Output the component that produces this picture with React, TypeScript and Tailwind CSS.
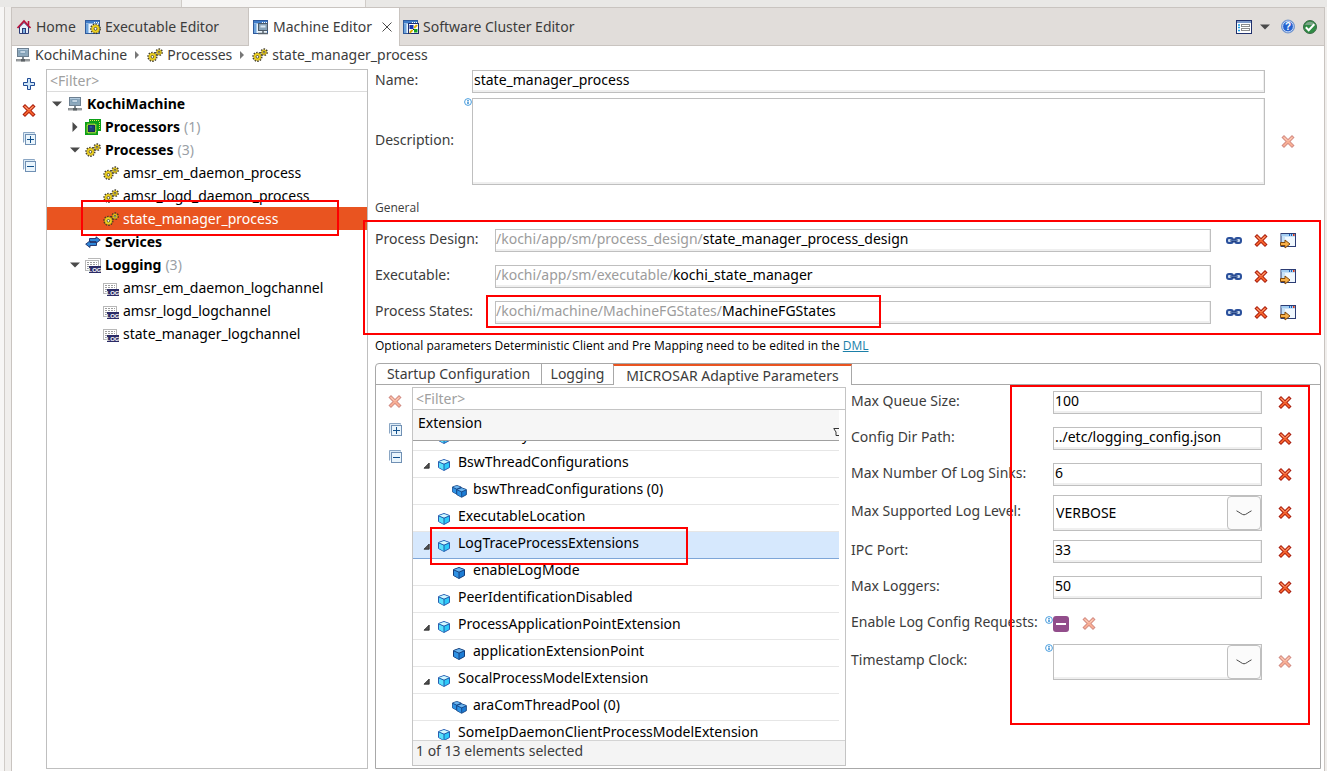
/**
 * MachineEditorPage
 * Editor pane for a machine model: element tree on the left, process form on the right.
 */

import { useState, type ReactNode } from 'react';

// ---------------------------------------------------------------- icons

function Svg({ children, size = 16, className = '' }: { children: ReactNode; size?: number; className?: string }) {
  return (
    <svg width={size} height={size} viewBox={`0 0 ${size} ${size}`} className={`shrink-0 ${className}`} aria-hidden="true">
      {children}
    </svg>
  );
}

function HomeIcon() {
  return (
    <Svg>
      <path d="M3.500 8v6.500h9V8L8 3.500z" fill="#e8f0fa" stroke="#2c3c78" />
      <rect x="6.500" y="9.500" width="3" height="5" fill="#7fb0e0" stroke="#2c3c78" />
      <path d="M1.500 9 8 2l6.500 7" fill="none" stroke="#b8103c" strokeWidth="1.800" />
      <path d="M12.500 2v4" stroke="#b8103c" strokeWidth="1.600" />
    </Svg>
  );
}

function WindowBase() {
  return (
    <>
      <rect x="0.500" y="1.500" width="14" height="13" fill="#eaf4fc" stroke="#2f5a9c" />
      <rect x="1" y="2" width="13" height="2.500" fill="#3f7cc8" />
      <path d="M9 3.500h1M11 3.500h1M13 3.500h1" stroke="#fff" />
      <rect x="1" y="5" width="2.500" height="9" fill="#6ea4dc" />
    </>
  );
}

function GearShape({ cx, cy, r }: { cx: number; cy: number; r: number }) {
  return (
    <>
      <circle cx={cx} cy={cy} r={r} fill="none" stroke="#3a3626" strokeWidth="2.400" strokeDasharray="1.300 1.100" />
      <circle cx={cx} cy={cy} r={r - 0.2} fill="#f0d420" stroke="#a88c10" strokeWidth="0.500" />
      <circle cx={cx} cy={cy} r={r * 0.34} fill="#fff" stroke="#3a3626" strokeWidth="0.800" />
    </>
  );
}

function ExecutableEditorIcon() {
  return (
    <Svg>
      <WindowBase />
      <GearShape cx={10.5} cy={9.8} r={4.2} />
    </Svg>
  );
}

function MachineEditorIcon() {
  return (
    <Svg>
      <WindowBase />
      <rect x="5.500" y="4.500" width="9" height="7" fill="#86a2b8" stroke="#4c5a68" />
      <rect x="7.500" y="6.500" width="5" height="2" fill="#dceaf4" />
      <path d="M10 12v2M5 14.500h10" stroke="#5a646e" strokeWidth="1.500" />
    </Svg>
  );
}

function ClusterEditorIcon() {
  return (
    <Svg>
      <WindowBase />
      <rect x="5.500" y="4.500" width="10" height="10" fill="#fff" stroke="#1c2c70" />
      <rect x="6.500" y="6" width="4" height="4" fill="#1838b0" />
      <rect x="11" y="10" width="3.500" height="3.500" fill="#12a020" />
      <path d="M11 8.500h1v-1h1v-1h1.500M6.500 13.500h1v-1h1v-1h1.500" stroke="#e0b000" strokeWidth="1.400" fill="none" />
      <path d="M10 10l1 1" stroke="#222" />
    </Svg>
  );
}

function MachineIcon() {
  return (
    <Svg>
      <rect x="2.500" y="1.500" width="11" height="8" fill="#8ea9bd" stroke="#6c7f90" />
      <path d="M3 2.500h10" stroke="#b4cce0" />
      <rect x="5" y="4" width="5.500" height="2" fill="#eef6fc" stroke="#5f86a4" strokeWidth="0.600" />
      <rect x="7" y="10" width="2" height="3" fill="#7c868e" />
      <rect x="1.500" y="12.500" width="13" height="1.500" fill="#a8acb0" stroke="#84898c" strokeWidth="0.800" />
      <rect x="6" y="12" width="4" height="2.500" fill="#5c6266" />
    </Svg>
  );
}

function GearsIcon() {
  return (
    <Svg>
      <GearShape cx={12} cy={5.2} r={2.7} />
      <GearShape cx={5.4} cy={9.8} r={3.9} />
    </Svg>
  );
}

function ProcessorsIcon() {
  return (
    <Svg>
      <rect x="4" y="0" width="12" height="12" fill="#0ca018" />
      <path d="M5 1.500h9M14.500 3v8" stroke="#f0e850" strokeDasharray="1 1" />
      <rect x="0" y="3" width="13" height="13" fill="#0ca018" />
      <rect x="2.500" y="5.500" width="8" height="8" fill="none" stroke="#f4ec50" strokeDasharray="1 1" strokeWidth="2" />
      <rect x="3.500" y="6.500" width="6" height="6" fill="#1c3f78" stroke="#16305e" />
      <path d="M5 8h2" stroke="#3f6cb0" />
    </Svg>
  );
}

function ServicesIcon() {
  return (
    <Svg>
      <path d="M4.500 4.500H11V2.800L15.300 6 11 9.200V7.500H4.500z" fill="#2f86d8" stroke="#1c2c66" strokeWidth="0.900" />
      <path d="M11.500 8.500H5V6.800L.7 10.200 5 13.500v-2h6.500z" fill="#2f86d8" stroke="#1c2c66" strokeWidth="0.900" />
    </Svg>
  );
}

function LogIcon({ stacked = false }: { stacked?: boolean }) {
  return (
    <Svg>
      {stacked && <path d="M3 1.500h12.500V9" fill="none" stroke="#b8b8b8" />}
      <rect x="0.500" y="3.500" width="13" height="10" fill="#fff" stroke="#b8b8b8" />
      <path d="M2 5.500h10M2 7.500h10M2 9.500h2M2 11.500h2" stroke="#9c9c9c" strokeDasharray="2 1" />
      <rect x="4" y="9" width="12" height="7" fill="#2b2b66" />
      <text x="10" y="14.800" textAnchor="middle" fontSize="6" fontWeight="700" fill="#fff" fontFamily="Liberation Sans, sans-serif">
        LOG
      </text>
    </Svg>
  );
}

function AddIcon() {
  return (
    <Svg>
      <path d="M6.500 2.500h3v4h4v3h-4v4h-3v-4h-4v-3h4z" fill="#cfe6f8" stroke="#1f4a94" />
    </Svg>
  );
}

function DeleteIcon({ faded = false }: { faded?: boolean }) {
  return (
    <Svg className={faded ? 'opacity-50' : ''}>
      <path d="M4 3.500l8 8M12 3.500l-8 8" stroke="#a4180a" strokeWidth="3.600" strokeLinecap="square" />
      <path d="M4 3.500l8 8M12 3.500l-8 8" stroke="#f4622c" strokeWidth="1.800" strokeLinecap="square" />
      <path d="M4 3.500l3 3M12 3.500l-3 3" stroke="#fbb898" strokeWidth="1" />
    </Svg>
  );
}

function TreeToggleIcon({ expand = false }: { expand?: boolean }) {
  return (
    <Svg>
      <path d="M2.500 12.500v-10h11v1" fill="#dcebf6" stroke="#8aa6c4" />
      <rect x="4.500" y="4.500" width="10" height="10" fill="#eaf5fc" stroke="#7090b4" />
      <path d="M6 9.500h7" stroke="#12508c" />
      {expand && <path d="M9.500 6v7" stroke="#12508c" />}
    </Svg>
  );
}

function LinkIcon() {
  return (
    <Svg>
      <rect x="1" y="5" width="6" height="5" rx="2" fill="#c8daf0" stroke="#2a509c" strokeWidth="2" />
      <rect x="9" y="5" width="6" height="5" rx="2" fill="#c8daf0" stroke="#2a509c" strokeWidth="2" />
      <path d="M4.500 7.500h7" stroke="#1c3470" strokeWidth="2.400" />
      <path d="M5 7.300h6" stroke="#6a94d4" strokeWidth="0.800" />
    </Svg>
  );
}

function OpenIcon() {
  return (
    <Svg>
      <rect x="1" y="0.500" width="14.500" height="13" fill="#c8e2f8" stroke="#2c3c74" />
      <rect x="5" y="4" width="10" height="9" fill="#f0f8fe" />
      <rect x="1.500" y="1" width="13.500" height="2" fill="#a4cef2" />
      <path d="M9 2h1M11 2h1" stroke="#1c60b8" strokeWidth="2" />
      <path d="M13 2h1.500" stroke="#d83818" strokeWidth="2" />
      <path d="M.5 9.500h4.500V7l5 4-5 4v-2.500H.5z" fill="#f8b048" stroke="#80480c" />
    </Svg>
  );
}

function ListViewIcon() {
  return (
    <Svg>
      <rect x="0.500" y="1.500" width="15" height="13" fill="#fff" stroke="#20306c" />
      <rect x="1" y="2" width="14" height="2" fill="#7c98c8" />
      <path d="M2 6h2M2 8.500h2M2 11.500h2" stroke="#18a0e8" strokeWidth="1.400" />
      <rect x="5.500" y="5.500" width="8" height="2" fill="#fff" stroke="#8c8c8c" />
      <rect x="5.500" y="9.500" width="8" height="2" fill="#fff" stroke="#8c8c8c" />
    </Svg>
  );
}

function HelpIcon() {
  return (
    <Svg>
      <circle cx="8" cy="7.500" r="6.500" fill="#2462d0" stroke="#7c9ccc" />
      <circle cx="8" cy="7.500" r="5.400" fill="none" stroke="#fff" strokeWidth="0.800" />
      <text x="8" y="11.300" textAnchor="middle" fontSize="10" fontWeight="700" fill="#fff" fontFamily="Liberation Sans, sans-serif">
        ?
      </text>
    </Svg>
  );
}

function ValidIcon() {
  return (
    <Svg>
      <circle cx="8" cy="8" r="6.500" fill="#2f8c44" stroke="#3c6a48" />
      <path d="M3 6a5.500 5.500 0 0 1 10 0" fill="#7ca488" />
      <path d="M3.800 8.200l2.900 3 5.600-6" fill="none" stroke="#fff" strokeWidth="2" />
    </Svg>
  );
}

function InfoIcon() {
  return (
    <Svg size={8}>
      <circle cx="4" cy="4" r="3.400" fill="#fff" stroke="#4a9ede" strokeWidth="1" />
      <path d="M4 3.600v2.400M4 2v1" stroke="#2a86d0" strokeWidth="1.400" />
    </Svg>
  );
}

function Cube({ light = false }: { light?: boolean }) {
  return (
    <>
      <path d="M6 0.500l5.500 2v6L6 11.500.5 8.500v-6z" fill={light ? '#2cc8f8' : '#1c7cd4'} stroke={light ? '#2c5cb0' : '#143c78'} />
      <path d="M6 1l5 1.700L6 5 1 2.700z" fill={light ? '#d4f6fe' : '#6cb4ee'} />
      <path d="M1 3.200l5 2v6L1 8.300z" fill={light ? '#58e0fc' : '#2f92e4'} />
      <path d="M1 3l5 2.200L11 3M6 5.200V11" fill="none" stroke={light ? '#1c4ca0' : '#143c78'} strokeWidth="0.900" />
    </>
  );
}

function CubeIcon({ kind }: { kind: CubeKind }) {
  if (kind === 'double') {
    return (
      <svg width="16" height="13" viewBox="0 0 16 13" className="shrink-0" aria-hidden="true">
        <g transform="scale(.8)">
          <Cube />
        </g>
        <g transform="translate(4.500 2.400) scale(.86)">
          <Cube />
        </g>
      </svg>
    );
  }
  return (
    <svg width="16" height="13" viewBox="0 0 16 13" className="shrink-0" aria-hidden="true">
      <g transform="translate(1 1)">
        <Cube light={kind === 'light'} />
      </g>
    </svg>
  );
}

function CaretDown() {
  return (
    <svg width="10" height="6" viewBox="0 0 10 6" className="shrink-0" aria-hidden="true">
      <path d="M0 .5h10L5 5.500z" fill="#4a4a4a" />
    </svg>
  );
}

function CaretRight() {
  return (
    <svg width="6" height="10" viewBox="0 0 6 10" className="shrink-0" aria-hidden="true">
      <path d="M.5 0v10L5.500 5z" fill="#4a4a4a" />
    </svg>
  );
}

function CrumbArrow() {
  return (
    <svg width="4" height="8" viewBox="0 0 4 8" className="mx-1 shrink-0" aria-hidden="true">
      <path d="M0 0v8l4-4z" fill="#777" />
    </svg>
  );
}

// ---------------------------------------------------------------- data

type CubeKind = 'light' | 'dark' | 'double';

interface TreeNode {
  label: string;
  indent: string;
  icon: ReactNode;
  state?: 'open' | 'closed';
  count?: number;
  bold?: boolean;
}

const TREE: TreeNode[] = [
  { label: 'KochiMachine', indent: 'pl-1', icon: <MachineIcon />, state: 'open', bold: true },
  { label: 'Processors', indent: 'pl-[22px]', icon: <ProcessorsIcon />, state: 'closed', count: 1, bold: true },
  { label: 'Processes', indent: 'pl-[22px]', icon: <GearsIcon />, state: 'open', count: 3, bold: true },
  { label: 'amsr_em_daemon_process', indent: 'pl-10', icon: <GearsIcon /> },
  { label: 'amsr_logd_daemon_process', indent: 'pl-10', icon: <GearsIcon /> },
  { label: 'state_manager_process', indent: 'pl-10', icon: <GearsIcon /> },
  { label: 'Services', indent: 'pl-[22px]', icon: <ServicesIcon />, bold: true },
  { label: 'Logging', indent: 'pl-[22px]', icon: <LogIcon stacked />, state: 'open', count: 3, bold: true },
  { label: 'amsr_em_daemon_logchannel', indent: 'pl-10', icon: <LogIcon /> },
  { label: 'amsr_logd_logchannel', indent: 'pl-10', icon: <LogIcon /> },
  { label: 'state_manager_logchannel', indent: 'pl-10', icon: <LogIcon /> },
];

const REFERENCES = [
  { id: 'design', label: 'Process Design:', path: '/kochi/app/sm/process_design/', name: 'state_manager_process_design' },
  { id: 'executable', label: 'Executable:', path: '/kochi/app/sm/executable/', name: 'kochi_state_manager' },
  { id: 'states', label: 'Process States:', path: '/kochi/machine/MachineFGStates/', name: 'MachineFGStates' },
];

const EXTENSIONS: { label: string; kind: CubeKind; open?: boolean }[] = [
  { label: 'ArtifactKey', kind: 'light' },
  { label: 'BswThreadConfigurations', kind: 'light', open: true },
  { label: 'bswThreadConfigurations (0)', kind: 'double' },
  { label: 'ExecutableLocation', kind: 'light' },
  { label: 'LogTraceProcessExtensions', kind: 'light', open: true },
  { label: 'enableLogMode', kind: 'dark' },
  { label: 'PeerIdentificationDisabled', kind: 'light' },
  { label: 'ProcessApplicationPointExtension', kind: 'light', open: true },
  { label: 'applicationExtensionPoint', kind: 'dark' },
  { label: 'SocalProcessModelExtension', kind: 'light', open: true },
  { label: 'araComThreadPool (0)', kind: 'double' },
  { label: 'SomeIpDaemonClientProcessModelExtension', kind: 'light' },
];

const FIELD = 'border border-[#bfbfbf] bg-white shadow-[inset_-1px_-2px_0_#efefef]';
const MARK = 'pointer-events-none absolute z-20 border-2 border-[#fe0000]';

// ---------------------------------------------------------------- parts

function IconButton({ label, children }: { label: string; children: ReactNode }) {
  return (
    <button type="button" aria-label={label} className="flex h-4 w-4 shrink-0 items-center justify-center">
      {children}
    </button>
  );
}

function EditorTabs() {
  return (
    <div className="flex h-[38px] shrink-0 items-stretch bg-[#e1ddda]">
      <button type="button" className="flex w-[69px] items-center gap-1 border-b border-[#c9c4c0] pl-1">
        <HomeIcon />
        Home
      </button>
      <button type="button" className="flex w-[167px] items-center gap-1 whitespace-nowrap border-b border-[#c9c4c0] pl-1">
        <ExecutableEditorIcon />
        Executable Editor
      </button>
      <div className="flex w-[152px] items-center justify-between border-x border-[#c9c4c0] bg-white pl-1 pr-[7px]">
        <button type="button" className="flex items-center gap-1 whitespace-nowrap">
          <MachineEditorIcon />
          Machine Editor
        </button>
        <button type="button" aria-label="Close tab" className="flex">
          <Svg size={10}>
            <path d="M.5.5l9 9M9.500.5l-9 9" stroke="#4a4a4a" />
          </Svg>
        </button>
      </div>
      <button type="button" className="flex items-center gap-1 whitespace-nowrap border-b border-[#c9c4c0] pl-[3px]">
        <ClusterEditorIcon />
        Software Cluster Editor
      </button>
      <div className="flex flex-1 items-center justify-end border-b border-[#c9c4c0] pr-[6px]">
        <IconButton label="Layout"><ListViewIcon /></IconButton>
        <button type="button" aria-label="View menu" className="ml-2 mr-[10px] flex"><CaretDown /></button>
        <IconButton label="Help"><HelpIcon /></IconButton>
        <span className="ml-[6px] flex"><IconButton label="Validation status"><ValidIcon /></IconButton></span>
      </div>
    </div>
  );
}

function Breadcrumb() {
  return (
    <nav className="flex h-[23px] shrink-0 items-center gap-1 pb-[5px] pl-[3px]">
      <MachineIcon />
      <a href="#machine">KochiMachine</a>
      <CrumbArrow />
      <GearsIcon />
      <a href="#processes">Processes</a>
      <CrumbArrow />
      <GearsIcon />
      <a href="#process">state_manager_process</a>
    </nav>
  );
}

function ModelTree() {
  const [selected, setSelected] = useState('state_manager_process');

  return (
    <section className="relative flex w-[322px] shrink-0 flex-col border border-[#bfbfbf] text-black">
      <input
        aria-label="Filter model tree"
        placeholder="<Filter>"
        className="h-[22px] shrink-0 border-b border-[#dcdcdc] px-[3px] outline-none placeholder:text-[#a0a0a0]"
      />
      <ul>
        {TREE.map((node) => (
          <li key={node.label}>
            <button
              type="button"
              onClick={() => setSelected(node.label)}
              className={`flex h-[23px] w-full items-center gap-1 ${node.indent} ${
                node.label === selected ? 'bg-[#e95420] text-white' : ''
              }`}
            >
              <span className="flex w-3 shrink-0 justify-center">
                {node.state === 'open' && <CaretDown />}
                {node.state === 'closed' && <CaretRight />}
              </span>
              {node.icon}
              <span className={node.bold ? 'font-bold' : ''}>{node.label}</span>
              {node.count && <span className="text-[#9a9fa6]">({node.count})</span>}
            </button>
          </li>
        ))}
      </ul>
      <div className={`${MARK} left-[34px] top-[130px] h-9 w-[258px]`} />
    </section>
  );
}

function ReferenceRows() {
  return (
    <div className="relative mt-3 flex flex-col gap-[13px]">
      {REFERENCES.map((ref) => (
        <div key={ref.id} className="flex h-[23px] items-center">
          <label htmlFor={ref.id} className="w-[120px] shrink-0 pb-[3px]">{ref.label}</label>
          <div className={`mr-[15px] flex h-full min-w-0 flex-1 items-center pb-[3px] ${FIELD}`}>
            <span className="text-[#9c9c9c]">{ref.path}</span>
            <input id={ref.id} defaultValue={ref.name} className="min-w-0 flex-1 bg-transparent text-black outline-none" />
          </div>
          <div className="flex gap-[11px] pr-[25px]">
            <IconButton label={`Link ${ref.name}`}><LinkIcon /></IconButton>
            <IconButton label={`Remove ${ref.name}`}><DeleteIcon /></IconButton>
            <IconButton label={`Open ${ref.name}`}><OpenIcon /></IconButton>
          </div>
        </div>
      ))}
      <div className={`${MARK} -bottom-[11px] -left-3 right-0 -top-[9px]`} />
      <div className={`${MARK} -bottom-1 left-[111px] h-[33px] w-[395px]`} />
    </div>
  );
}

function ExtensionTable() {
  const [selected, setSelected] = useState('LogTraceProcessExtensions');

  return (
    <div className="relative flex w-[434px] shrink-0 flex-col border border-[#c4c4c4] text-black">
      <input
        aria-label="Filter extensions"
        placeholder="<Filter>"
        className="h-[22px] shrink-0 border-b border-[#c4c4c4] px-[3px] outline-none placeholder:text-[#a0a0a0]"
      />
      <table className="mr-[6px] flex min-h-0 flex-1 flex-col">
        <thead className="z-10 block shrink-0 border-b border-[#a0a0a0] bg-[#f6f6f6]">
          <tr className="block">
            <th className="flex h-[30px] justify-between px-[5px] pr-0 pt-[3px] text-left font-normal">
              Extension
              <svg width="6" height="8" viewBox="0 0 6 8" className="mb-1 self-end" aria-hidden="true">
                <path d="M.5.5H6M1 1l2 3v3.500h3" fill="none" stroke="#333" />
              </svg>
            </th>
          </tr>
        </thead>
        <tbody className="block min-h-0 flex-1 overflow-hidden">
          {EXTENSIONS.map((ext) => (
            <tr
              key={ext.label}
              onClick={() => setSelected(ext.label)}
              className={`block border-b first:-mt-[17px] ${
                ext.label === selected ? 'border-[#7ea6d8] bg-[#d6e8fd]' : 'border-[#e6e6e6]'
              }`}
            >
              <td className={`flex h-[26px] items-center pb-1 ${ext.kind === 'light' ? 'pl-[10px]' : 'pl-[25px]'}`}>
                <span className="flex w-[14px] shrink-0">
                  {ext.open && (
                    <svg width="7" height="7" viewBox="0 0 7 7" className="mt-[6px]" aria-hidden="true">
                      <path d="M6.200 1v5.200H1z" fill="#505050" stroke="#222" strokeWidth="0.800" />
                    </svg>
                  )}
                </span>
                <span className="mr-[5px] flex pt-1"><CubeIcon kind={ext.kind} /></span>
                {ext.label}
              </td>
            </tr>
          ))}
        </tbody>
      </table>
      <div className="h-[25px] shrink-0 border-t border-[#d4d4d4] bg-[#f4f4f4] px-[3px] text-[#3c3c3c]">
        1 of 13 elements selected
      </div>
      <div className={`${MARK} left-[17px] top-[139px] h-[38px] w-[258px]`} />
    </div>
  );
}

function ParamRow({ id, label, height = 'h-[23px]', children, faded }: {
  id: string;
  label: string;
  height?: string;
  children: ReactNode;
  faded?: boolean;
}) {
  return (
    <div className={`flex items-center ${height}`}>
      <label htmlFor={id} className="w-[202px] shrink-0 whitespace-nowrap pb-1">{label}</label>
      <div className="relative h-full min-w-0 flex-1">{children}</div>
      <div className="pl-[15px] pr-[27px]">
        <IconButton label={`Reset ${label}`}><DeleteIcon faded={faded} /></IconButton>
      </div>
    </div>
  );
}

function ParamInput({ id, value }: { id: string; value: string }) {
  return <input id={id} defaultValue={value} className={`h-full w-full px-px pb-1 text-black outline-none ${FIELD}`} />;
}

function ParamSelect({ id, options }: { id: string; options: string[] }) {
  return (
    <>
      <select id={id} className={`h-full w-full appearance-none pl-[2px] pr-10 text-black outline-none ${FIELD}`}>
        {options.map((option) => (
          <option key={option}>{option}</option>
        ))}
      </select>
      <span className="pointer-events-none absolute inset-y-px right-px flex w-[34px] items-center justify-center rounded border border-[#c0c0c0] bg-[#fbfbfb]">
        <svg width="16" height="6" viewBox="0 0 16 6" aria-hidden="true">
          <path d="M.5.8C4 2.500 6 4.800 8 4.800s4-2.300 7.500-4" fill="none" stroke="#4a4a4a" />
        </svg>
      </span>
    </>
  );
}

function InfoBadge() {
  return (
    <span className="absolute -left-2 top-0"><InfoIcon /></span>
  );
}

function Parameters() {
  return (
    <div className="relative min-w-0 flex-1 pl-[5px] pt-[6px]">
      <div className="flex flex-col gap-[13px]">
        <ParamRow id="queue" label="Max Queue Size:"><ParamInput id="queue" value="100" /></ParamRow>
        <ParamRow id="config" label="Config Dir Path:"><ParamInput id="config" value="../etc/logging_config.json" /></ParamRow>
        <ParamRow id="sinks" label="Max Number Of Log Sinks:"><ParamInput id="sinks" value="6" /></ParamRow>
      </div>
      <div className="flex flex-col gap-[9px] py-[9px]">
        <ParamRow id="level" label="Max Supported Log Level:" height="h-9">
          <ParamSelect id="level" options={['VERBOSE', 'DEBUG', 'INFO', 'WARN', 'ERROR', 'FATAL', 'OFF']} />
        </ParamRow>
        <ParamRow id="port" label="IPC Port:"><ParamInput id="port" value="33" /></ParamRow>
      </div>
      <div className="flex flex-col gap-[13px] pt-1">
        <ParamRow id="loggers" label="Max Loggers:"><ParamInput id="loggers" value="50" /></ParamRow>
        <div className="flex h-[23px] items-center">
          <label htmlFor="requests" className="w-[202px] shrink-0 whitespace-nowrap pb-1">Enable Log Config Requests:</label>
          <div className="relative flex items-center gap-3">
            <InfoBadge />
            <input
              id="requests"
              type="checkbox"
              className="h-4 w-4 appearance-none rounded-[3px] bg-[#924d8b] bg-[linear-gradient(#fff,#fff)] bg-[length:10px_2px] bg-center bg-no-repeat"
            />
            <IconButton label="Reset Enable Log Config Requests"><DeleteIcon faded /></IconButton>
          </div>
        </div>
      </div>
      <div className="pt-[9px]">
        <ParamRow id="clock" label="Timestamp Clock:" height="h-9" faded>
          <InfoBadge />
          <ParamSelect id="clock" options={['']} />
        </ParamRow>
      </div>
      <div className={`${MARK} left-[164px] right-[10px] top-0 h-[340px]`} />
    </div>
  );
}

function ParameterTabs() {
  return (
    <section className="mb-[2px] mt-[8px] flex min-h-0 flex-1 flex-col rounded-t border border-[#a8a8a8]">
      <div className="flex h-[21px] shrink-0">
        <button type="button" className="w-[166px] whitespace-nowrap border-b border-r border-[#a8a8a8] leading-5">
          Startup Configuration
        </button>
        <button type="button" className="w-[71px] border-b border-[#a8a8a8] leading-5">Logging</button>
        <button
          type="button"
          className="w-[239px] whitespace-nowrap border-x border-t-2 border-x-[#a8a8a8] border-t-[#e95420] leading-[18px]"
        >
          MICROSAR Adaptive Parameters
        </button>
        <div className="flex-1 border-b border-[#a8a8a8]" />
      </div>
      <div className="flex min-h-0 flex-1">
        <div className="flex w-9 shrink-0 flex-col items-center gap-[11px] pl-[2px] pt-[9px]">
          <IconButton label="Delete extension"><DeleteIcon faded /></IconButton>
          <IconButton label="Expand extensions"><TreeToggleIcon expand /></IconButton>
          <IconButton label="Collapse extensions"><TreeToggleIcon /></IconButton>
        </div>
        <div className="flex min-h-0 pb-[2px] pt-[2px]">
          <ExtensionTable />
        </div>
        <Parameters />
      </div>
    </section>
  );
}

export default function MachineEditorPage() {
  return (
    <div className="flex h-screen flex-col overflow-hidden bg-[#f0eeec] font-['Noto_Sans',sans-serif] text-[14px] leading-5 text-[#3c3c3c]">
      {/* Lower edge of the toolbar above the editor */}
      <div className="flex h-[7px] shrink-0 bg-[#e9e8e6] pl-[181px]">
        <div className="w-[185px] border-x border-[#d0ccc8] bg-[#f6f5f4]" />
      </div>

      <div className="flex min-h-0 flex-1">
        <div className="w-[5px] shrink-0 border-r border-[#d0ccc8] bg-[#f7f6f5]" />
        <main className="ml-[6px] mr-[2px] flex min-w-0 flex-1 flex-col border-x border-t border-[#c9c4c0] bg-white">
          <EditorTabs />
          <Breadcrumb />

          <div className="flex min-h-0 flex-1">
            <div className="flex w-[34px] shrink-0 flex-col items-center gap-[11px] pt-[7px]">
              <IconButton label="Add element"><AddIcon /></IconButton>
              <IconButton label="Delete element"><DeleteIcon /></IconButton>
              <IconButton label="Expand all"><TreeToggleIcon expand /></IconButton>
              <IconButton label="Collapse all"><TreeToggleIcon /></IconButton>
            </div>

            <div className="flex pb-[2px]">
              <ModelTree />
            </div>

            <div className="flex min-w-0 flex-1 flex-col pl-[7px] pr-[3px] pt-px">
              <div className="flex h-[23px] items-center">
                <label htmlFor="name" className="w-[97px] shrink-0 pb-1">Name:</label>
                <input
                  id="name"
                  defaultValue="state_manager_process"
                  className={`mr-14 h-full min-w-0 flex-1 px-px pb-1 text-black outline-none ${FIELD}`}
                />
              </div>
              <div className="mt-[5px] flex h-[87px] items-center">
                <label htmlFor="description" className="w-[97px] shrink-0 pb-1">Description:</label>
                <div className="relative h-full min-w-0 flex-1">
                  <InfoBadge />
                  <textarea id="description" className={`block h-full w-full resize-none outline-none ${FIELD}`} />
                </div>
                <div className="pl-[15px] pr-[25px]">
                  <IconButton label="Clear description"><DeleteIcon faded /></IconButton>
                </div>
              </div>

              <h2 className="mt-[14px] font-['Open_Sans',sans-serif] text-[12px] leading-[18px]">General</h2>
              <ReferenceRows />

              <p className="mt-[13px] whitespace-nowrap font-['Open_Sans',sans-serif] text-[12px] leading-[18px] text-black">
                Optional parameters Deterministic Client and Pre Mapping need to be edited in the{' '}
                <a href="#dml" className="text-[#1b7fa8] underline">DML</a>
              </p>

              <ParameterTabs />
            </div>
          </div>
        </main>
      </div>
    </div>
  );
}
